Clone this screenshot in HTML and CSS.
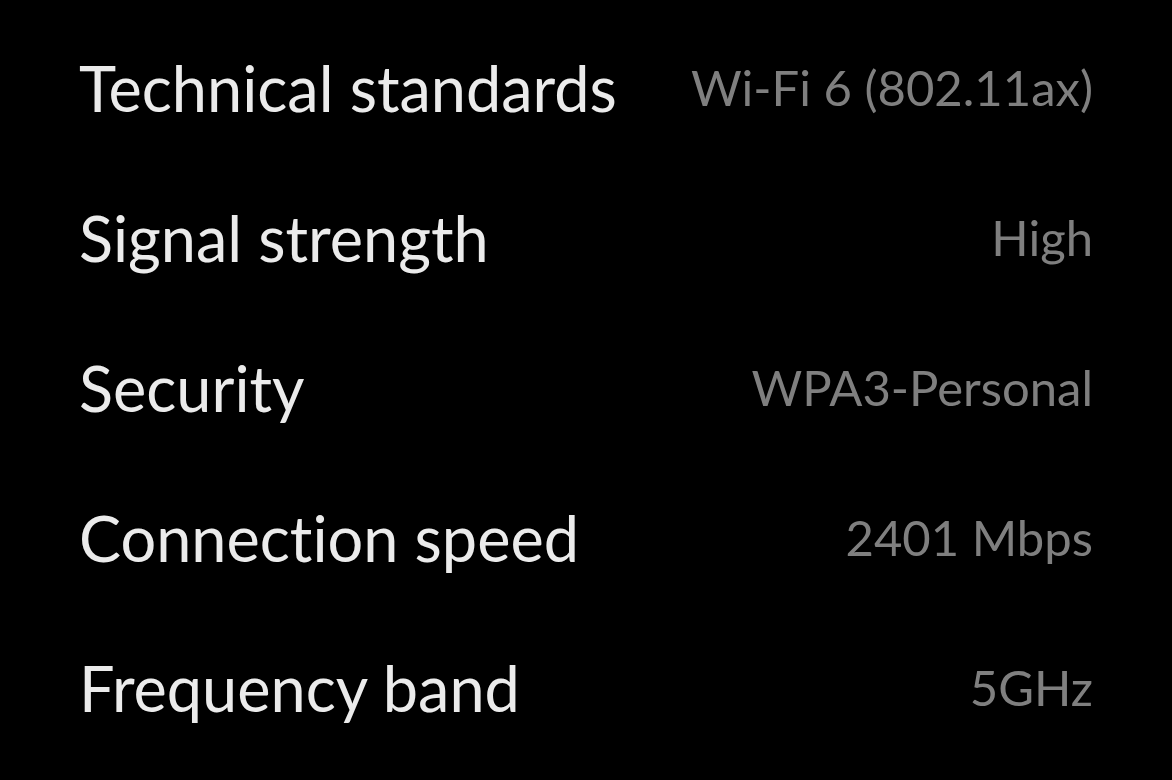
FILE: index.html
```html
<!DOCTYPE html>
<html>
<head>
<meta charset="utf-8">
<link rel="stylesheet" href="styles.css">
</head>
<body>
<div class="list">
  <div class="row"><span class="label">Technical standards</span><span class="value">Wi-Fi 6 (802.11ax)</span></div>
  <div class="row"><span class="label">Signal strength</span><span class="value">High</span></div>
  <div class="row"><span class="label">Security</span><span class="value">WPA3-Personal</span></div>
  <div class="row"><span class="label">Connection speed</span><span class="value">2401 Mbps</span></div>
  <div class="row"><span class="label">Frequency band</span><span class="value">5GHz</span></div>
</div>
</body>
</html>
```
FILE: styles.css
```css
html, body {
  margin: 0;
  padding: 0;
  background: #000;
  width: 1172px;
  height: 780px;
  overflow: hidden;
}
.list {
  display: flex;
  flex-direction: column;
  padding: 12px 79px 0 79px;
  font-family: "Lato", sans-serif;
  font-variant-ligatures: none;
}
.row {
  display: flex;
  justify-content: space-between;
  align-items: center;
  height: 150px;
}
.label {
  color: #ebebeb;
  font-size: 63px;
}
.value {
  color: #7f7f7f;
  font-size: 49px;
}
```
